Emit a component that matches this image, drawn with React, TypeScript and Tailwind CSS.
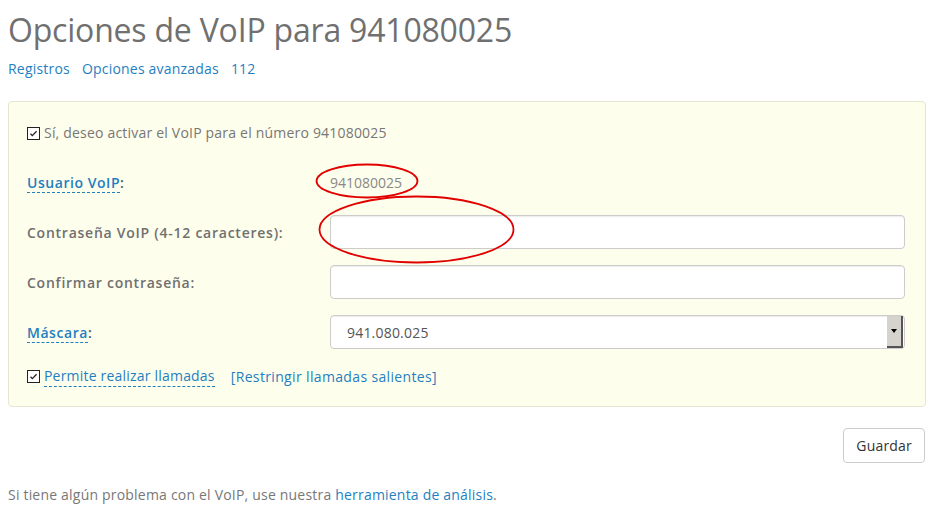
const blue = "text-[#1f7fc1]";

function Tick() {
  return (
    <svg width="13" height="13" viewBox="0 0 13 13" className="shrink-0">
      <rect x="0.5" y="0.5" width="12" height="12" fill="#fff" stroke="#222" />
      <path d="M3.5 6.8 L5.3 8.6 L9.6 4.2" fill="none" stroke="#222" strokeWidth="1.3" />
    </svg>
  );
}

function Row({ label, children }: { label: React.ReactNode; children: React.ReactNode }) {
  return (
    <div className="flex h-[34px] items-center">
      <div className="w-[303px] shrink-0 text-[14px] font-semibold tracking-[0.75px] text-[#707070]">{label}</div>
      <div className="flex-1">{children}</div>
    </div>
  );
}

const inputCls =
  "block h-[34px] w-full rounded-[4px] border border-[#cccccc] bg-white shadow-[inset_0_1px_1px_rgba(0,0,0,0.075)]";

export default function App() {
  return (
    <div className="relative min-h-screen bg-white px-2 font-['Open_Sans',sans-serif] text-[14px] tracking-[0.2px] text-[#777]">
      <h1 className="pt-[12px] text-[32px] leading-[35px] font-normal tracking-[-0.2px] text-[#707070]">
        Opciones de VoIP para 941080025
      </h1>

      <nav className={`mt-[12px] flex gap-3 leading-5 ${blue}`}>
        <a href="#">Registros</a>
        <a href="#">Opciones avanzadas</a>
        <a href="#">112</a>
      </nav>

      <form className="mt-[22px] rounded-[4px] border border-[#e6e6d4] bg-[#fefeec] pt-[21px] pr-[20px] pb-[19px] pl-[18px]">
        <label className="flex items-center gap-[4px] leading-5">
          <Tick />
          <span>Sí, deseo activar el VoIP para el número 941080025</span>
        </label>

        <div className="mt-[22px] flex flex-col gap-4">
          <Row
            label={
              <>
                <span className={`border-b border-dashed border-[#1f7fc1] tracking-[0.55px] ${blue}`}>Usuario VoIP</span>
                <span className="text-[#555]">:</span>
              </>
            }
          >
            <span className="tracking-normal text-[#888]">941080025</span>
          </Row>
          <Row label="Contraseña VoIP (4-12 caracteres):">
            <input type="password" className={inputCls} />
          </Row>
          <Row label="Confirmar contraseña:">
            <input type="password" className={inputCls} />
          </Row>
          <Row
            label={
              <>
                <span className={`border-b border-dashed border-[#1f7fc1] tracking-[0.55px] ${blue}`}>Máscara</span>
                <span className="text-[#555]">:</span>
              </>
            }
          >
            <div className={`${inputCls} flex items-center pr-[1px] pl-4 text-[#555]`}>
              <span className="flex-1">941.080.025</span>
              <span className="flex h-[32px] w-[16px] items-center justify-center border-r-2 border-b-2 border-r-[#555] border-b-[#555] bg-[#d6d3ce]">
                <span className="h-0 w-0 border-x-[3px] border-t-[4px] border-x-transparent border-t-black" />
              </span>
            </div>
          </Row>
        </div>

        <div className="mt-[17px] flex items-center leading-5">
          <Tick />
          <span className={`ml-[4px] border-b border-dashed border-[#1f7fc1] ${blue}`}>Permite realizar llamadas</span>
          <a href="#" className={`ml-4 tracking-[0.35px] ${blue}`}>
            [Restringir llamadas salientes]
          </a>
        </div>
      </form>

      <div className="mt-[21px] flex justify-end pr-[1px]">
        <button className="h-[35px] rounded-[4px] border border-[#cccccc] bg-white px-3 text-[14px] text-[#333]">
          Guardar
        </button>
      </div>

      <p className="mt-[22px] leading-5">
        Si tiene algún problema con el VoIP, use nuestra{" "}
        <a href="#" className={blue}>
          herramienta de análisis
        </a>
        .
      </p>

      <svg className="pointer-events-none absolute top-0 left-0" width="934" height="519">
        <ellipse cx="367" cy="181" rx="50.5" ry="16.5" fill="none" stroke="#e00000" strokeWidth="1.8" />
        <ellipse cx="416.5" cy="229.5" rx="97" ry="33" fill="none" stroke="#e00000" strokeWidth="1.8" />
      </svg>
    </div>
  );
}
